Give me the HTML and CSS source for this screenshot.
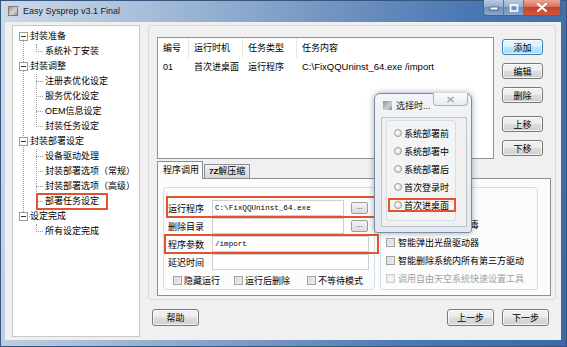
FILE: index.html
```html
<!DOCTYPE html>
<html lang="zh-CN">
<head>
    <meta charset="UTF-8">
    <title>Easy Sysprep v3.1 Final</title>
    <link rel="stylesheet" href="styles.css">
</head>
<body>
    <div class="window">
        <div class="titlebar">
            <span class="app-icon"></span>
            <span class="title">Easy Sysprep v3.1 Final</span>
            <div class="caption">
                <span class="cap cap-min"><svg width="10" height="6" viewBox="0 0 10 6"><rect x="1" y="2" width="8" height="3" fill="#fff" stroke="#3b5677" stroke-width="0.8"/></svg></span>
                <span class="cap cap-max"><svg width="10" height="8" viewBox="0 0 10 8"><rect x="1.5" y="1" width="7" height="6" fill="none" stroke="#fff" stroke-width="1.6"/></svg></span>
                <span class="cap cap-close"><svg width="12" height="9" viewBox="0 0 12 9"><path d="M2 1 L10 8 M10 1 L2 8" stroke="#fff" stroke-width="2.2" stroke-linecap="round"/></svg></span>
            </div>
        </div>

        <div class="client">
            <!-- navigation tree -->
            <div class="tree">
                <ul class="tree-root">
                    <li class="branch">
                        <div class="node"><span class="toggle"></span>封装准备</div>
                        <ul class="leaves">
                            <li>系统补丁安装</li>
                        </ul>
                    </li>
                    <li class="branch">
                        <div class="node"><span class="toggle"></span>封装调整</div>
                        <ul class="leaves">
                            <li>注册表优化设定</li>
                            <li>服务优化设定</li>
                            <li>OEM信息设定</li>
                            <li>封装任务设定</li>
                        </ul>
                    </li>
                    <li class="branch">
                        <div class="node"><span class="toggle"></span>封装部署设定</div>
                        <ul class="leaves">
                            <li>设备驱动处理</li>
                            <li>封装部署选项（常规）</li>
                            <li>封装部署选项（高级）</li>
                            <li><span class="marked">部署任务设定</span></li>
                        </ul>
                    </li>
                    <li class="branch">
                        <div class="node"><span class="toggle"></span>设定完成</div>
                        <ul class="leaves">
                            <li>所有设定完成</li>
                        </ul>
                    </li>
                </ul>
            </div>

            <div class="main">
                <div class="panel">
                    <div class="task-row">
                        <div class="listview">
                            <div class="lv-line lv-head">
                                <span class="col c1">编号</span>
                                <span class="col c2">运行时机</span>
                                <span class="col c3">任务类型</span>
                                <span class="col c4">任务内容</span>
                            </div>
                            <div class="lv-line">
                                <span class="col c1">01</span>
                                <span class="col c2">首次进桌面</span>
                                <span class="col c3">运行程序</span>
                                <span class="col c4 latin">C:\FixQQUninst_64.exe /import</span>
                            </div>
                        </div>
                        <div class="side-buttons">
                            <button class="btn btn-default">添加</button>
                            <button class="btn">编辑</button>
                            <button class="btn">删除</button>
                            <button class="btn gap-lg">上移</button>
                            <button class="btn">下移</button>
                        </div>
                    </div>

                    <div class="tabs">
                        <div class="tab-strip">
                            <span class="tab active">程序调用</span>
                            <span class="tab"><b>7Z</b>解压缩</span>
                        </div>
                        <div class="tab-page">
                            <div class="group prog-group">
                                <div class="field marked-row run-row">
                                    <span class="field-label">运行程序</span>
                                    <span class="box mono">C:\FixQQUninst_64.exe</span>
                                    <span class="browse">...</span>
                                </div>
                                <div class="field">
                                    <span class="field-label">删除目录</span>
                                    <span class="box"></span>
                                    <span class="browse">...</span>
                                </div>
                                <div class="field marked-row arg-row">
                                    <span class="field-label">程序参数</span>
                                    <span class="box wide mono">/import</span>
                                </div>
                                <div class="field">
                                    <span class="field-label">延迟时间</span>
                                    <span class="box wide"></span>
                                </div>
                                <div class="checks">
                                    <span class="check w1"><span class="cb"></span>隐藏运行</span>
                                    <span class="check w2"><span class="cb"></span>运行后删除</span>
                                    <span class="check"><span class="cb"></span>不等待模式</span>
                                </div>
                            </div>
                            <div class="group opt-group">
                                <div class="opt"><span class="cb"></span>智能关闭系统内杀毒</div>
                                <div class="opt"><span class="cb"></span>智能弹出光盘驱动器</div>
                                <div class="opt"><span class="cb"></span>智能删除系统内所有第三方驱动</div>
                                <div class="opt disabled"><span class="cb"></span>调用自由天空系统快速设置工具</div>
                            </div>
                        </div>
                    </div>
                </div>

                <div class="footer">
                    <button class="btn btn-wide">帮助</button>
                    <button class="btn btn-wide push">上一步</button>
                    <button class="btn btn-wide">下一步</button>
                </div>
            </div>
        </div>

        <!-- child dialog floating over the main window -->
        <div class="dialog">
            <div class="dlg-title">
                <span class="dlg-icon"></span>
                <span>选择时...</span>
                <span class="dlg-close"><svg width="9" height="7" viewBox="0 0 9 7"><path d="M1.5 1 L7.5 6 M7.5 1 L1.5 6" stroke="#9aa3ad" stroke-width="1.3"/></svg></span>
            </div>
            <div class="dlg-client">
                <div class="dlg-group">
                    <div class="radio"><span class="dot"></span>系统部署前</div>
                    <div class="radio"><span class="dot"></span>系统部署中</div>
                    <div class="radio"><span class="dot"></span>系统部署后</div>
                    <div class="radio"><span class="dot"></span>首次登录时</div>
                    <div class="radio marked-radio"><span class="dot"></span>首次进桌面</div>
                </div>
            </div>
        </div>
    </div>
</body>
</html>
```

FILE: styles.css
```css
* {
    box-sizing: border-box;
}

body {
    margin: 0;
    font-family: "Liberation Sans", "Noto Sans CJK SC", sans-serif;
    font-size: 9px;
    color: #000;
    background: #fff;
}

ul {
    list-style: none;
    margin: 0;
    padding: 0;
}

/* window frame */
.window {
    position: relative;
    width: 567px;
    height: 347px;
    padding: 0 6px 7px 5px;
    display: flex;
    flex-direction: column;
    background: linear-gradient(100deg, #cdd9e8 0%, #aac0da 22%, #7898c3 50%, #4a78b2 75%, #3b69a4 100%);
    box-shadow: inset 0 0 0 1px #35577f;
    overflow: hidden;
}

.titlebar {
    height: 22px;
    display: flex;
    align-items: center;
    padding-left: 3px;
}

.app-icon {
    width: 10px;
    height: 10px;
    background: linear-gradient(135deg, #9a9a9a, #d6d6d6 60%, #8d8d8d);
    border: 1px solid #7c7c7c;
}

.title {
    margin-left: 5px;
    font-size: 9px;
    color: #1a1a1a;
}

.caption {
    margin-left: auto;
    align-self: flex-start;
    display: flex;
    height: 16px;
    border: 1px solid #4b6483;
    border-top: none;
    border-radius: 0 0 4px 4px;
    overflow: hidden;
}

.cap {
    display: flex;
    align-items: center;
    justify-content: center;
    height: 100%;
}

.cap-min,
.cap-max {
    width: 20px;
    background: linear-gradient(#b9cbe0, #94add0 45%, #6f8fba 50%, #89a7cf);
    border-right: 1px solid #5d7699;
}

.cap-close {
    width: 36px;
    background: linear-gradient(#e9a693, #d8705a 45%, #c5432b 50%, #d2583c);
}

/* client area */
.client {
    flex: 1;
    display: flex;
    background: #f0f0f0;
    padding: 3px 5px 3px 7px;
}

.tree {
    width: 128px;
    height: 312px;
    background: #fff;
    border: 1px solid #c9c9c9;
    padding-top: 3px;
}

.tree-root {
    position: relative;
}

.tree-root::before {
    content: "";
    position: absolute;
    left: 10px;
    top: 7px;
    bottom: 23px;
    border-left: 1px dotted #9a9a9a;
}

.node {
    position: relative;
    height: 15px;
    line-height: 15px;
    padding-left: 17px;
}

.node::after {
    content: "";
    position: absolute;
    left: 14px;
    top: 7px;
    width: 3px;
    border-top: 1px dotted #9a9a9a;
}

.toggle {
    position: absolute;
    left: 6px;
    top: 3px;
    width: 9px;
    height: 9px;
    border: 1px solid #9b9b9b;
    background: #fff;
    z-index: 1;
}

.toggle::after {
    content: "";
    position: absolute;
    left: 1px;
    top: 3px;
    width: 5px;
    height: 1px;
    background: #333;
}

.leaves {
    position: relative;
}

.leaves::before {
    content: "";
    position: absolute;
    left: 23px;
    top: 0;
    bottom: 7px;
    border-left: 1px dotted #9a9a9a;
}

.leaves li {
    position: relative;
    height: 15px;
    line-height: 15px;
    padding-left: 32px;
    white-space: nowrap;
}

.leaves li::before {
    content: "";
    position: absolute;
    left: 23px;
    top: 7px;
    width: 7px;
    border-top: 1px dotted #9a9a9a;
}

.marked {
    position: relative;
    display: inline-block;
}

.marked::after {
    content: "";
    position: absolute;
    left: -9px;
    right: -9px;
    top: -1px;
    bottom: -1px;
    border: 2px solid #e2532f;
}

/* right side */
.main {
    margin-left: 8px;
    width: 408px;
    display: flex;
    flex-direction: column;
}

.panel {
    height: 275px;
    border: 1px solid #d3dbe2;
    border-radius: 3px;
    padding: 11px 0 0 8px;
}

.task-row {
    display: flex;
}

.listview {
    width: 337px;
    height: 122px;
    background: #fff;
    border: 1px solid #8f9297;
}

.lv-line {
    display: flex;
    height: 17px;
    align-items: center;
    white-space: nowrap;
}

.lv-head {
    height: 20px;
}

.lv-head .col {
    border-right: 1px solid #e6e6e6;
    height: 100%;
    line-height: 20px;
}

.col {
    padding-left: 5px;
}

.c1 { width: 31px; }
.c2 { width: 54px; }
.c3 { width: 54px; }
.c4 { flex: 1; border-right: none !important; }

.latin {
    font-size: 9.5px;
}

.side-buttons {
    margin-left: 8px;
    width: 41px;
    display: flex;
    flex-direction: column;
    padding-top: 2px;
    gap: 8px;
}

.btn {
    font-family: inherit;
    font-size: 9px;
    color: #000;
    height: 16px;
    padding: 0;
    border: 1px solid #7a7a7a;
    border-radius: 3px;
    background: linear-gradient(#f3f3f3, #ebebeb 48%, #dddddd 52%, #d0d0d0);
    box-shadow: inset 0 0 0 1px rgba(255, 255, 255, 0.7);
}

.btn-default {
    border-color: #3c7fb1;
    background: linear-gradient(#eaf6fd, #d9f0fc 48%, #bee6fd 52%, #a7d9f5);
}

.gap-lg {
    margin-top: 5px;
}

/* tabs */
.tabs {
    margin-top: 2px;
}

.tab-strip {
    display: flex;
    align-items: flex-end;
    height: 17px;
}

.tab {
    height: 14px;
    line-height: 12px;
    padding: 0 4px;
    margin-left: 1px;
    border: 1px solid #8c8e94;
    border-bottom: none;
    background: linear-gradient(#f2f2f2, #e3e3e3 50%, #d6d6d6);
    white-space: nowrap;
}

.tab b {
    font-size: 8px;
}

.tab.active {
    height: 18px;
    line-height: 17px;
    width: 46px;
    margin-left: 0;
    margin-bottom: -1px;
    padding-left: 5px;
    background: #fcfcfc;
    position: relative;
    z-index: 1;
}

.tab-page {
    width: 394px;
    height: 118px;
    display: flex;
    gap: 5px;
    padding: 8px 0 0 5px;
    background: #fcfcfc;
    border: 1px solid #8c8e94;
}

.group {
    height: 103px;
    border: 1px solid #d5dfe5;
    border-radius: 3px;
}

.prog-group {
    width: 212px;
    padding: 12px 0 0 4px;
}

.field {
    position: relative;
    display: flex;
    align-items: center;
    height: 16px;
    margin-bottom: 2px;
}

.field-label {
    width: 44px;
}

.box {
    width: 132px;
    height: 16px;
    background: #fff;
    border: 1px solid #cfcfcf;
    padding-left: 2px;
    line-height: 14px;
}

.box.wide {
    width: 157px;
}

.mono {
    font-family: "Liberation Mono", monospace;
    font-size: 7.6px;
}

.browse {
    width: 17px;
    height: 12px;
    margin-left: 7px;
    border: 1px solid #9d9d9d;
    border-radius: 2px;
    background: linear-gradient(#f4f4f4, #dcdcdc);
    font-size: 8px;
    line-height: 7px;
    text-align: center;
    color: #444;
}

.marked-row::after {
    content: "";
    position: absolute;
    border: 2px solid #e2532f;
}

.run-row::after {
    left: -2px;
    right: -4px;
    top: -4px;
    bottom: -2px;
}

.arg-row::after {
    left: -4px;
    right: -5px;
    top: -2px;
    bottom: -2px;
}

.checks {
    display: flex;
    align-items: center;
    height: 16px;
    padding-left: 5px;
}

.check {
    display: flex;
    align-items: center;
}

.check.w1 { width: 61px; }
.check.w2 { width: 73px; }

.cb {
    width: 9px;
    height: 9px;
    margin-right: 2px;
    border: 1px solid #a2a2a2;
    background: linear-gradient(135deg, #d3d3d3, #f3f3f3);
    box-shadow: inset 0 0 0 1px #e8e8e8;
}

.opt-group {
    width: 158px;
    padding: 27px 0 0 5px;
}

.opt {
    display: flex;
    align-items: center;
    height: 18px;
    white-space: nowrap;
}

.opt .cb {
    margin-right: 3px;
}

.opt.disabled {
    color: #a3a3a3;
}

.opt.disabled .cb {
    border-color: #cfcfcf;
    background: #f4f4f4;
}

.footer {
    display: flex;
    margin-top: 9px;
    padding: 0 7px 0 4px;
}

.btn-wide {
    width: 47px;
    height: 17px;
}

.footer .btn + .btn {
    margin-left: 8px;
}

.footer .push {
    margin-left: auto !important;
}

/* floating dialog */
.dialog {
    position: absolute;
    left: 374px;
    top: 93px;
    width: 98px;
    height: 140px;
    display: flex;
    flex-direction: column;
    padding: 0 4px 5px 6px;
    background: linear-gradient(#f1f4f8, #e2e8ef);
    border: 1px solid #7d8c9e;
    border-radius: 6px 6px 3px 3px;
    box-shadow: 0 0 6px rgba(40, 60, 90, 0.45);
    z-index: 5;
}

.dlg-title {
    position: relative;
    height: 23px;
    display: flex;
    align-items: center;
    gap: 4px;
    padding-left: 2px;
    color: #222;
}

.dlg-icon {
    width: 9px;
    height: 9px;
    background: linear-gradient(135deg, #8e8e8e, #cfcfcf 60%, #8a8a8a);
}

.dlg-close {
    position: absolute;
    right: -1px;
    top: -1px;
    width: 35px;
    height: 13px;
    display: flex;
    align-items: center;
    justify-content: center;
    border: 1px solid #a8b3c0;
    border-top: none;
    border-radius: 0 0 4px 4px;
    background: linear-gradient(#fbfcfd, #e7ebf0);
}

.dlg-client {
    flex: 1;
    background: #f0f0f0;
    border: 1px solid #b9c3ce;
    padding: 2px 10px 5px 4px;
}

.dlg-group {
    height: 100%;
    border: 1px solid #d5dfe5;
    border-radius: 3px;
    padding: 3px 0 0 7px;
    background: #f4f4f4;
}

.radio {
    position: relative;
    display: flex;
    align-items: center;
    height: 18px;
    white-space: nowrap;
}

.dot {
    width: 8px;
    height: 8px;
    margin-right: 2px;
    border-radius: 50%;
    border: 1px solid #9a9a9a;
    background: radial-gradient(circle at 40% 40%, #fff, #d4d4d4);
}

.marked-radio::after {
    content: "";
    position: absolute;
    left: -6px;
    right: -1px;
    top: 2px;
    bottom: 2px;
    border: 2px solid #e2532f;
}
```
